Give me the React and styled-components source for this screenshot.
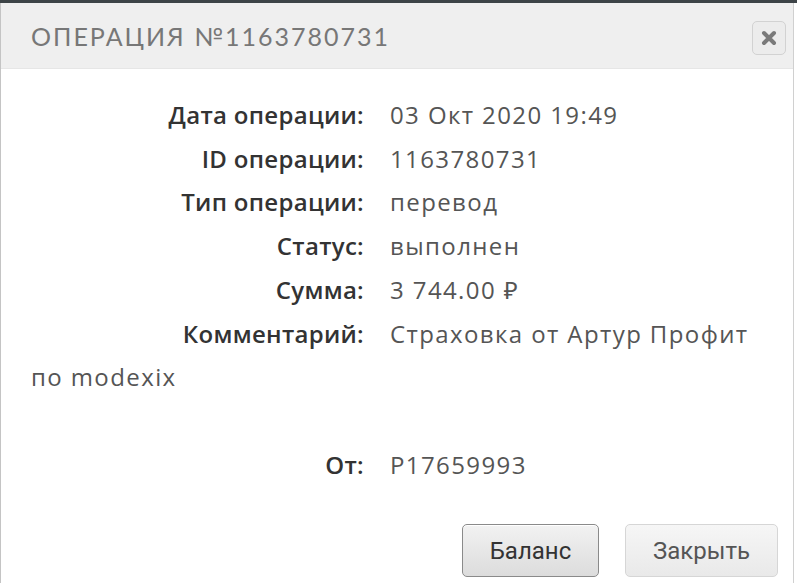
import React from 'react'
import styled, { createGlobalStyle } from 'styled-components'

const Global = createGlobalStyle`
  html, body { margin: 0; padding: 0; background: #fff; }
  body { width: 797px; height: 583px; overflow: hidden; }
`

const Backdrop = styled.div`
  width: 797px;
  height: 583px;
  background: #fff;
  border-top: 3px solid #3d4447;
  box-sizing: border-box;
`

const Dialog = styled.div`
  width: 794px;
  height: 580px;
  box-sizing: border-box;
  border-left: 1px solid #c4c4c4;
  border-right: 1px solid #d0d0d0;
  background: #fff;
  display: flex;
  flex-direction: column;
`

const Header = styled.div`
  height: 65px;
  background: #efefef;
  border-bottom: 1px solid #e6e6e6;
  display: flex;
  align-items: center;
  justify-content: space-between;
  padding: 0 7px 0 30px;
`

const Title = styled.h2`
  margin: 0;
  padding-top: 0;
  font-family: 'Lato', 'Noto Sans', sans-serif;
  font-weight: 400;
  font-size: 25px;
  letter-spacing: 2px;
  color: #777;
`

const CloseBtn = styled.button`
  width: 34px;
  height: 34px;
  margin-top: 4px;
  border: 1px solid #d2d2d2;
  border-radius: 5px;
  background: #ececec;
  display: flex;
  align-items: center;
  justify-content: center;
  padding: 0;
`

const Body = styled.div`
  padding: 24px 30px 0 30px;
  font-family: 'Open Sans', 'Noto Sans', sans-serif;
  font-size: 24px;
  letter-spacing: 1.4px;
  line-height: 43.7px;
  color: #555;
`

const Row = styled.div`
  min-height: 43.7px;
`

const Label = styled.span`
  display: inline-block;
  width: 333px;
  margin-right: 26px;
  text-align: right;
  font-weight: 600;
  letter-spacing: 0.3px;
  color: #333;
`

const Footer = styled.div`
  display: flex;
  justify-content: flex-end;
  gap: 26px;
  padding: 38px 15px 0 0;
`

const Button = styled.button`
  height: 53px;
  padding: 0;
  width: ${p => p.$w}px;
  border-radius: 5px;
  font-family: 'Roboto', 'Liberation Sans', sans-serif;
  font-size: 24px;
  color: ${p => (p.$primary ? '#333' : '#555')};
  border: 1px solid ${p => (p.$primary ? '#8a8a8a' : '#d6d6d6')};
  background: ${p =>
    p.$primary
      ? 'linear-gradient(#f2f2f2, #dcdcdc)'
      : 'linear-gradient(#f6f6f6, #e9e9e9)'};
  box-shadow: ${p => (p.$primary ? 'inset 0 1px 0 #fff' : 'none')};
`

const rows = [
  ['Дата операции:', '03 Окт 2020 19:49'],
  ['ID операции:', '1163780731'],
  ['Тип операции:', 'перевод'],
  ['Статус:', 'выполнен'],
  ['Сумма:', '3 744.00 ₽'],
  ['Комментарий:', 'Страховка от Артур Профит по modexix'],
  ['', ''],
  ['От:', 'P17659993'],
]

export default function App() {
  return (
    <Backdrop>
      <Global />
      <Dialog>
        <Header>
          <Title>ОПЕРАЦИЯ №1163780731</Title>
          <CloseBtn>
            <svg width="16" height="16" viewBox="0 0 16 16">
              <path d="M3 3 L13 13 M13 3 L3 13" stroke="#7a7a7a" strokeWidth="4" strokeLinecap="round" />
            </svg>
          </CloseBtn>
        </Header>
        <Body>
          {rows.map(([l, v], i) => (
            <Row key={i}>
              {l && <Label>{l}</Label>}
              {v}
            </Row>
          ))}
        </Body>
        <Footer>
          <Button $primary $w={137}>Баланс</Button>
          <Button $w={153}>Закрыть</Button>
        </Footer>
      </Dialog>
    </Backdrop>
  )
}
